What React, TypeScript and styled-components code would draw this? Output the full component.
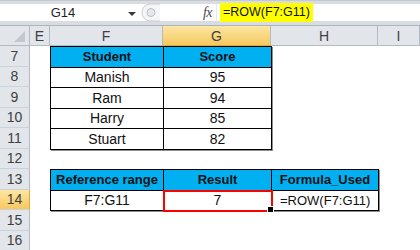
import React from 'react'
import styled, { createGlobalStyle } from 'styled-components'

const GlobalStyle = createGlobalStyle`
  html, body {
    margin: 0;
    padding: 0;
    background: #ffffff;
    overflow: hidden;
  }
  * {
    box-sizing: border-box;
  }
`

const colors = {
  HEADER_BG: '#E2E5EA',
  HEADER_LINE: '#B4BAC3',
  HEADER_TEXT: '#3F3F3F',
  ACTIVE_TOP: '#FCE6A4',
  ACTIVE_BOTTOM: '#F6C95F',
  BLUE: '#00B0F0',
  RED: '#FF0000',
  YELLOW: '#FFFF00',
}

const fonts = {
  SHEET: '"Liberation Sans", Arial, sans-serif',
}

const Page = styled.div`
  width: 420px;
  height: 250px;
  display: flex;
  flex-direction: column;
  overflow: hidden;
  font-family: ${fonts.SHEET};
`

const FormulaBar = styled.div`
  display: flex;
  align-items: stretch;
  height: 26px;
  padding: 3px 0 4px;
  background: #D9DDE2;
  border-top: 1px solid #C4C9D0;
  border-bottom: 1px solid #AEB4BD;
`

const NameBox = styled.div`
  position: relative;
  width: 140px;
  display: flex;
  align-items: center;
  justify-content: center;
  padding-right: 14px;
  background: #ffffff;
  font-size: 13px;
  color: #1E1E1E;
`

const DropArrow = styled.span`
  position: absolute;
  right: 4px;
  top: 8px;
  width: 0;
  height: 0;
  border-left: 4px solid transparent;
  border-right: 4px solid transparent;
  border-top: 4px solid #3A3A3A;
`

const Splitter = styled.div`
  width: 22px;
  display: flex;
  align-items: center;
  justify-content: center;
  background: #ffffff;
`

const FxBox = styled.div`
  width: 54px;
  display: flex;
  align-items: center;
  justify-content: flex-end;
  padding-right: 4px;
  background: #ffffff;
  font-family: "Liberation Serif", "Times New Roman", serif;
  font-style: italic;
  font-size: 14px;
  color: #4A4A4A;
  letter-spacing: -0.5px;
`

const FormulaInput = styled.div`
  flex: 1;
  display: flex;
  align-items: center;
  padding-left: 3px;
  background: #ffffff;
  border-left: 1px solid #E6E8EB;
`

const Highlight = styled.span`
  background: ${colors.YELLOW};
  padding: 2px 3px 2px 3px;
  font-size: 12.5px;
  line-height: 15px;
  color: #111111;
`

const Sheet = styled.div`
  display: grid;
  grid-template-columns: 30px 20px 113px 108px 107px 42px;
  grid-template-rows: 20px repeat(10, 20.5px);
`

const Corner = styled.div`
  grid-row: 1;
  grid-column: 1;
  position: relative;
  background: ${colors.HEADER_BG};
  border-right: 1px solid ${colors.HEADER_LINE};
  border-bottom: 1px solid ${colors.HEADER_LINE};

  &::after {
    content: '';
    position: absolute;
    right: 4px;
    bottom: 3px;
    width: 0;
    height: 0;
    border-left: 11px solid transparent;
    border-bottom: 11px solid #C3C8CF;
  }
`

const ColHeader = styled.div<{ $col: number; $active?: boolean }>`
  grid-row: 1;
  grid-column: ${(p) => p.$col};
  display: flex;
  align-items: center;
  justify-content: center;
  font-size: 14px;
  color: ${colors.HEADER_TEXT};
  background: ${(p) =>
    p.$active
      ? `linear-gradient(${colors.ACTIVE_TOP}, ${colors.ACTIVE_BOTTOM})`
      : colors.HEADER_BG};
  border-right: 1px solid ${colors.HEADER_LINE};
  border-bottom: 1px solid ${(p) => (p.$active ? '#E2A93A' : colors.HEADER_LINE)};
`

const RowHeader = styled.div<{ $row: number; $active?: boolean }>`
  grid-column: 1;
  grid-row: ${(p) => p.$row};
  display: flex;
  align-items: center;
  justify-content: center;
  font-size: 14px;
  color: ${colors.HEADER_TEXT};
  background: ${(p) =>
    p.$active
      ? `linear-gradient(${colors.ACTIVE_TOP}, ${colors.ACTIVE_BOTTOM})`
      : colors.HEADER_BG};
  border-right: 1px solid ${(p) => (p.$active ? '#E2A93A' : colors.HEADER_LINE)};
  border-bottom: 1px solid #CDD2D8;
`

const DataTable = styled.div<{ $cols: string; $rows: string; $area: string }>`
  grid-area: ${(p) => p.$area};
  width: calc(100% + 1px);
  height: calc(100% + 1px);
  display: grid;
  grid-template-columns: ${(p) => p.$cols};
  grid-template-rows: ${(p) => p.$rows};
  border-top: 1px solid #000000;
  border-left: 1px solid #000000;
  box-shadow: 1px 1px 0 #8E8E8E;
  background: #ffffff;
`

const Cell = styled.div<{ $head?: boolean; $align?: 'left' | 'center'; $selected?: boolean }>`
  position: relative;
  display: flex;
  align-items: center;
  justify-content: ${(p) => (p.$align === 'left' ? 'flex-start' : 'center')};
  padding-left: ${(p) => (p.$align === 'left' ? '8px' : '0')};
  border-right: 1px solid #000000;
  border-bottom: 1px solid #000000;
  background: ${(p) => (p.$head ? colors.BLUE : '#ffffff')};
  font-size: ${(p) => (p.$head || p.$align === 'left' ? '13px' : '14px')};
  font-weight: ${(p) => (p.$head ? 700 : 400)};
  color: #111111;
  white-space: nowrap;
  ${(p) =>
    p.$selected &&
    `
    z-index: 1;
    outline: 2px solid ${colors.RED};
    outline-offset: -1px;

    &::after {
      content: '';
      position: absolute;
      right: -3px;
      bottom: -3px;
      width: 5px;
      height: 5px;
      background: #000000;
      border: 1px solid #ffffff;
    }
  `}
`

const SplitterIcon: React.FC = () => (
  <svg width='20' height='19' viewBox='0 0 20 19'>
    <path d='M19 1 H9 A8 8.5 0 0 0 9 18 H19' fill='#F4F5F7' stroke='#C9CDD3' strokeWidth='1' />
    <circle cx='10' cy='9.5' r='4' fill='#E6E8EC' stroke='#B9BEC6' strokeWidth='1' />
  </svg>
)

const columns = ['E', 'F', 'G', 'H', 'I']
const rowNumbers = [7, 8, 9, 10, 11, 12, 13, 14, 15, 16]

const students = [
  { name: 'Manish', score: 95 },
  { name: 'Ram', score: 94 },
  { name: 'Harry', score: 85 },
  { name: 'Stuart', score: 82 },
]

const App: React.FC = () => {
  return (
    <Page>
      <GlobalStyle />
      <FormulaBar>
        <NameBox>
          G14
          <DropArrow />
        </NameBox>
        <Splitter>
          <SplitterIcon />
        </Splitter>
        <FxBox>fx</FxBox>
        <FormulaInput>
          <Highlight>=ROW(F7:G11)</Highlight>
        </FormulaInput>
      </FormulaBar>
      <Sheet>
        <Corner />
        {columns.map((c, i) => (
          <ColHeader key={c} $col={i + 2} $active={c === 'G'}>
            {c}
          </ColHeader>
        ))}
        {rowNumbers.map((n, i) => (
          <RowHeader key={n} $row={i + 2} $active={n === 14}>
            {n}
          </RowHeader>
        ))}

        <DataTable $area='2 / 3 / 7 / 5' $cols='113px 1fr' $rows='repeat(5, 1fr)'>
          <Cell $head>Student</Cell>
          <Cell $head>Score</Cell>
          {students.map((s) => (
            <React.Fragment key={s.name}>
              <Cell>{s.name}</Cell>
              <Cell>{s.score}</Cell>
            </React.Fragment>
          ))}
        </DataTable>

        <DataTable $area='8 / 3 / 10 / 6' $cols='113px 108px 1fr' $rows='repeat(2, 1fr)'>
          <Cell $head>Reference range</Cell>
          <Cell $head>Result</Cell>
          <Cell $head>Formula_Used</Cell>
          <Cell>F7:G11</Cell>
          <Cell $selected>7</Cell>
          <Cell $align='left'>=ROW(F7:G11)</Cell>
        </DataTable>
      </Sheet>
    </Page>
  )
}

export default App
